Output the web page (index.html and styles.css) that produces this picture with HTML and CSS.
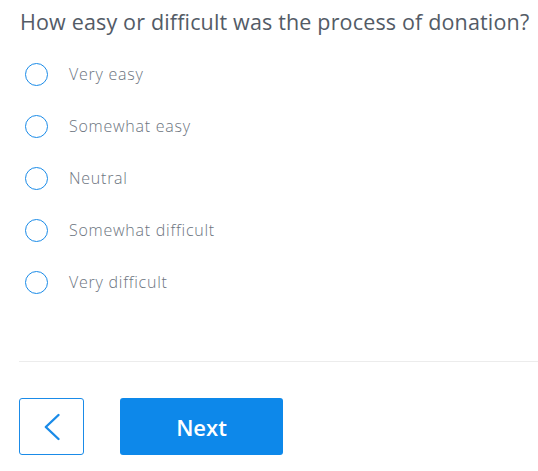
FILE: index.html
```html
<!DOCTYPE html>
<html>
<head>
<meta charset="utf-8">
<link rel="stylesheet" href="styles.css">
</head>
<body>
<div class="survey">
  <h1 class="question">How easy or difficult was the process of donation?</h1>
  <ul class="options">
    <li class="option"><span class="radio"></span><span class="label">Very easy</span></li>
    <li class="option"><span class="radio"></span><span class="label">Somewhat easy</span></li>
    <li class="option"><span class="radio"></span><span class="label">Neutral</span></li>
    <li class="option"><span class="radio"></span><span class="label">Somewhat difficult</span></li>
    <li class="option"><span class="radio"></span><span class="label">Very difficult</span></li>
  </ul>
  <hr class="divider">
  <div class="actions">
    <button class="back" aria-label="Back">
      <svg width="18" height="28" viewBox="0 0 18 28"><path d="M15.5 2 L2.8 14 L15.5 26" fill="none" stroke="#1a8be8" stroke-width="2.4" stroke-linecap="round" stroke-linejoin="round"/></svg>
    </button>
    <button class="next">Next</button>
  </div>
</div>
</body>
</html>
```

FILE: styles.css
```css
html, body {
  margin: 0;
  padding: 0;
  background: #ffffff;
}
.survey {
  padding: 6px 0 0 19px;
  font-family: "Open Sans", "Noto Sans", sans-serif;
}
.question {
  margin: 0 0 0 1px;
  font-size: 21.5px;
  font-weight: 400;
  letter-spacing: 0.16px;
  line-height: 32px;
  color: #535b66;
}
.options {
  list-style: none;
  margin: 10px 0 0 0;
  padding: 0;
}
.option {
  display: flex;
  align-items: center;
  height: 52px;
}
.radio {
  box-sizing: border-box;
  width: 23px;
  height: 23px;
  margin-left: 6px;
  border: 1.5px solid #1a8be8;
  border-radius: 50%;
  flex: none;
}
.label {
  margin-left: 21px;
  font-size: 16px;
  font-weight: 300;
  letter-spacing: 0.75px;
  color: #6c7480;
}
.divider {
  margin: 53px 0 0 0;
  border: 0;
  height: 1px;
  background: #ececec;
}
.actions {
  display: flex;
  gap: 36px;
  margin-top: 36px;
}
.back {
  box-sizing: border-box;
  width: 65px;
  height: 57px;
  background: #fff;
  border: 1px solid #1a8be8;
  border-radius: 3px;
  display: flex;
  align-items: center;
  justify-content: center;
  padding: 0;
}
.next {
  width: 163px;
  height: 57px;
  border: 0;
  border-radius: 3px;
  background: #0d88ea;
  color: #ffffff;
  font-family: "Open Sans", "Noto Sans", sans-serif;
  font-size: 22px;
  font-weight: 600;
}
```
